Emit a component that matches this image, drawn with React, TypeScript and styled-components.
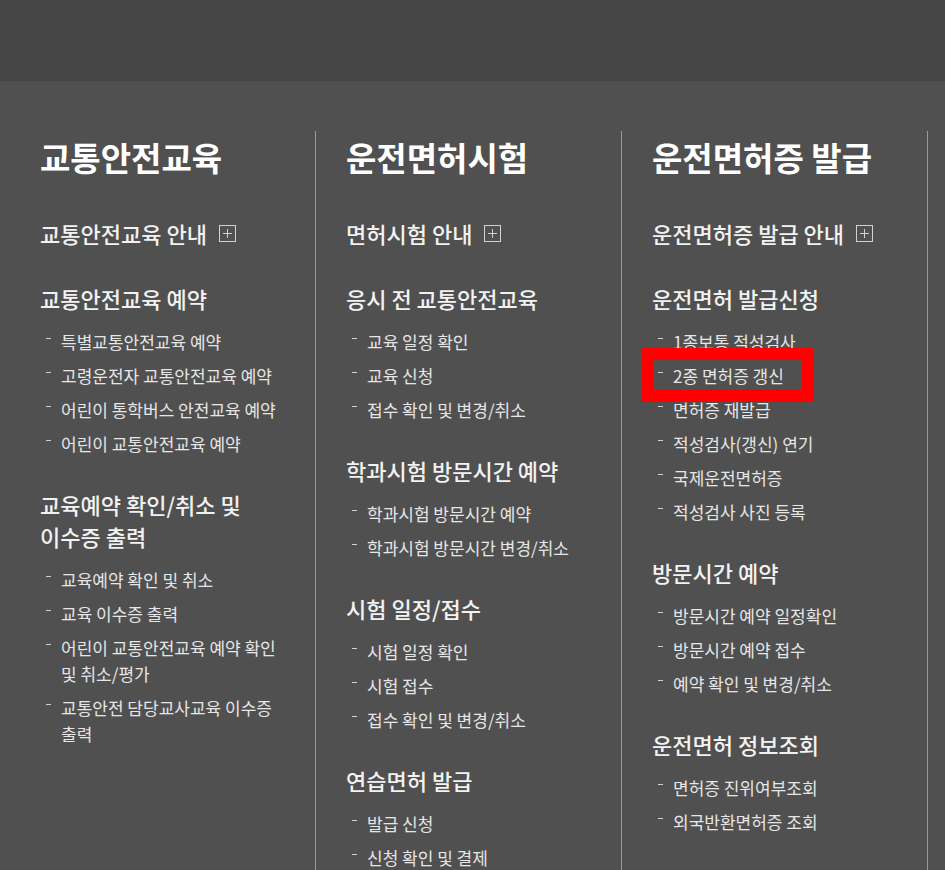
import React from "react";
import styled, { createGlobalStyle } from "styled-components";

type Item = { label: string; marked?: boolean };
type Section = { title: string; guide?: boolean; items?: Item[] };
type Column = { title: string; sections: Section[] };

const COLUMNS: Column[] = [
  {
    title: "교통안전교육",
    sections: [
      { title: "교통안전교육 안내", guide: true },
      {
        title: "교통안전교육 예약",
        items: [
          { label: "특별교통안전교육 예약" },
          { label: "고령운전자 교통안전교육 예약" },
          { label: "어린이 통학버스 안전교육 예약" },
          { label: "어린이 교통안전교육 예약" },
        ],
      },
      {
        title: "교육예약 확인/취소 및 이수증 출력",
        items: [
          { label: "교육예약 확인 및 취소" },
          { label: "교육 이수증 출력" },
          { label: "어린이 교통안전교육 예약 확인 및 취소/평가" },
          { label: "교통안전 담당교사교육 이수증 출력" },
        ],
      },
    ],
  },
  {
    title: "운전면허시험",
    sections: [
      { title: "면허시험 안내", guide: true },
      {
        title: "응시 전 교통안전교육",
        items: [
          { label: "교육 일정 확인" },
          { label: "교육 신청" },
          { label: "접수 확인 및 변경/취소" },
        ],
      },
      {
        title: "학과시험 방문시간 예약",
        items: [
          { label: "학과시험 방문시간 예약" },
          { label: "학과시험 방문시간 변경/취소" },
        ],
      },
      {
        title: "시험 일정/접수",
        items: [
          { label: "시험 일정 확인" },
          { label: "시험 접수" },
          { label: "접수 확인 및 변경/취소" },
        ],
      },
      {
        title: "연습면허 발급",
        items: [{ label: "발급 신청" }, { label: "신청 확인 및 결제" }],
      },
    ],
  },
  {
    title: "운전면허증 발급",
    sections: [
      { title: "운전면허증 발급 안내", guide: true },
      {
        title: "운전면허 발급신청",
        items: [
          { label: "1종보통 적성검사" },
          { label: "2종 면허증 갱신", marked: true },
          { label: "면허증 재발급" },
          { label: "적성검사(갱신) 연기" },
          { label: "국제운전면허증" },
          { label: "적성검사 사진 등록" },
        ],
      },
      {
        title: "방문시간 예약",
        items: [
          { label: "방문시간 예약 일정확인" },
          { label: "방문시간 예약 접수" },
          { label: "예약 확인 및 변경/취소" },
        ],
      },
      {
        title: "운전면허 정보조회",
        items: [
          { label: "면허증 진위여부조회" },
          { label: "외국반환면허증 조회" },
        ],
      },
    ],
  },
];

function PlusBox() {
  return (
    <PlusIcon width="17" height="17" viewBox="0 0 17 17" aria-hidden="true">
      <rect x="0.5" y="0.5" width="16" height="16" fill="none" stroke="#d2d2d2" />
      <line x1="8.5" y1="4" x2="8.5" y2="13" stroke="#d2d2d2" />
      <line x1="4" y1="8.5" x2="13" y2="8.5" stroke="#d2d2d2" />
    </PlusIcon>
  );
}

export default function App() {
  return (
    <>
      <GlobalStyle />
      <Page>
        <TopBar />
        <Sitemap>
          {COLUMNS.map((col) => (
            <MenuColumn key={col.title}>
              <ColumnTitle>{col.title}</ColumnTitle>
              {col.sections.map((sec) => (
                <MenuSection key={sec.title} $guide={!!sec.guide}>
                  <SectionTitle>
                    {sec.title}
                    {sec.guide && <PlusBox />}
                  </SectionTitle>
                  {sec.items && (
                    <LinkList>
                      {sec.items.map((it) => (
                        <LinkItem key={it.label} $marked={!!it.marked}>
                          {it.label}
                        </LinkItem>
                      ))}
                    </LinkList>
                  )}
                </MenuSection>
              ))}
            </MenuColumn>
          ))}
        </Sitemap>
      </Page>
    </>
  );
}

const GlobalStyle = createGlobalStyle`
  html, body {
    margin: 0;
    padding: 0;
    overflow: hidden;
    background: #505050;
  }
  body {
    font-family: "Noto Sans CJK KR", "Noto Sans", sans-serif;
  }
`;

const Page = styled.div`
  min-height: 870px;
  background: #505050;
`;

const TopBar = styled.header`
  height: 81px;
  background: #464646;
`;

const Sitemap = styled.nav`
  display: flex;
  align-items: stretch;
  padding: 50px 0 0 10px;
`;

const MenuColumn = styled.div`
  box-sizing: border-box;
  flex: 0 0 306px;
  min-height: 739px;
  padding: 0 25px 0 30px;
  border-right: 1px solid #9a9a9a;
  display: flex;
  flex-direction: column;
`;

const ColumnTitle = styled.h2`
  margin: 0 0 3px;
  font-size: 33px;
  line-height: 52px;
  font-weight: 700;
  color: #ffffff;
`;

const MenuSection = styled.section<{ $guide: boolean }>`
  margin-top: 31px;
  padding-bottom: ${(p) => (p.$guide ? "2px" : "0")};
`;

const SectionTitle = styled.h3`
  display: flex;
  flex-wrap: wrap;
  align-items: center;
  margin: 0;
  font-size: 22px;
  line-height: 32px;
  font-weight: 500;
  color: #f2f2f2;
  word-break: keep-all;
`;

const PlusIcon = styled.svg`
  display: block;
  margin-left: 12px;
  flex: none;
`;

const LinkList = styled.ul`
  list-style: none;
  margin: 15px 0 0;
  padding: 0;
  display: flex;
  flex-direction: column;
  gap: 8px;
`;

const LinkItem = styled.li<{ $marked: boolean }>`
  position: relative;
  padding-left: 21px;
  font-size: 17px;
  line-height: 26px;
  color: #e6e6e6;
  word-break: keep-all;

  &::before {
    content: "";
    position: absolute;
    left: 6px;
    top: 9px;
    width: 5px;
    height: 1px;
    background: #d0d0d0;
  }

  ${(p) =>
    p.$marked &&
    `
    &::after {
      content: "";
      position: absolute;
      left: -11px;
      top: -15px;
      width: 173px;
      height: 54px;
      box-sizing: border-box;
      border: 12px solid #ff0000;
    }
  `}
`;
